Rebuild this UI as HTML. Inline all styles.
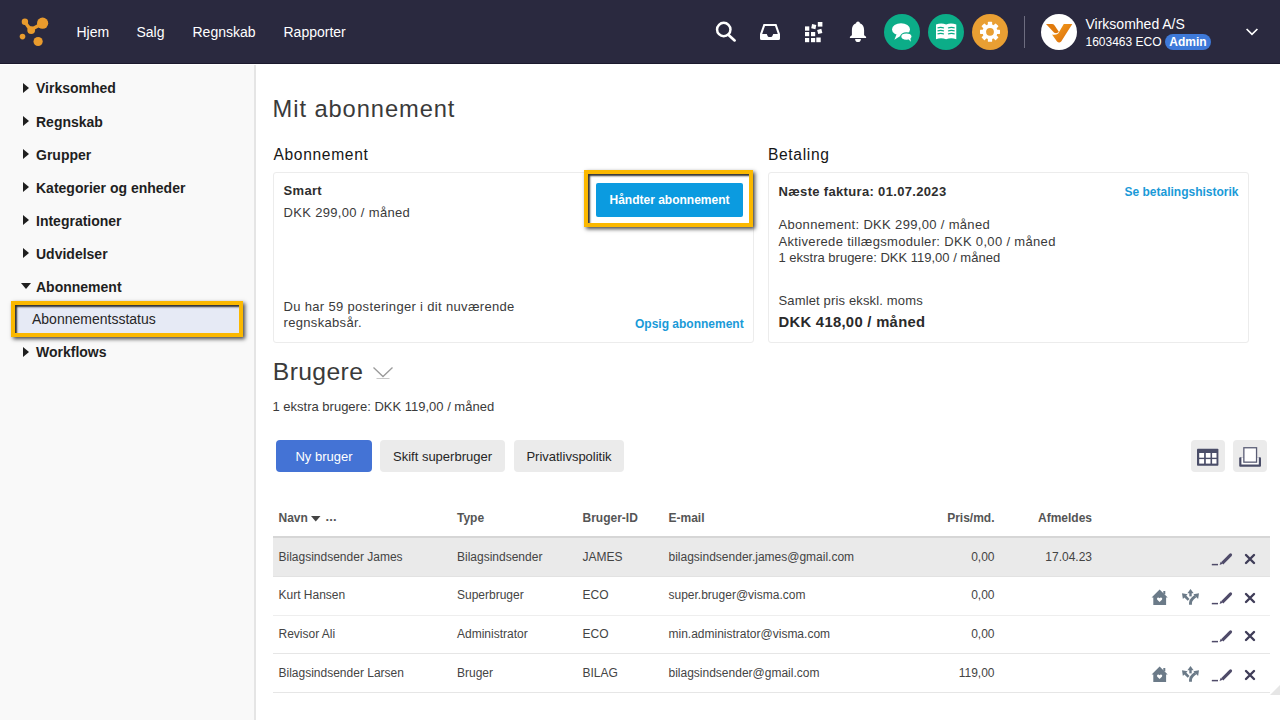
<!DOCTYPE html>
<html><head><meta charset="utf-8">
<style>
*{margin:0;padding:0;box-sizing:border-box}
html,body{width:1280px;height:720px;overflow:hidden;background:#fff;font-family:"Liberation Sans",sans-serif;color:#262626}
.a{position:absolute;white-space:nowrap}
#hdr{position:absolute;left:0;top:0;width:1280px;height:64px;background:#2a293f;box-shadow:inset 0 -1px 0 #1b192d}
.nav{color:#fff;font-size:14px;line-height:16px}
#side{position:absolute;left:0;top:65px;width:256px;height:655px;background:#f9f9f9;border-right:2px solid #e5e5e5}
.si{font-weight:bold;font-size:14px;line-height:16px;color:#1f1f1f;left:36px}
.tri{position:absolute;width:0;height:0;border-top:5px solid transparent;border-bottom:5px solid transparent;border-left:6px solid #1f1f1f;left:23px}
.hl{position:absolute;border:4px solid #fbb800;box-shadow:2px 2px 4px rgba(0,0,0,.72), inset 2px 2px 2px rgba(0,0,0,.8)}
.h1{font-size:23.7px;line-height:28px;color:#3a3a3a;letter-spacing:0.92px}
.h2{font-size:15.6px;line-height:20px;color:#161616;letter-spacing:0.65px}
.card{position:absolute;border:1px solid #ececec;border-radius:3px;background:#fff}
.t13{font-size:13px;line-height:16px;color:#3a3a3a;letter-spacing:0.33px}
.lnk{font-weight:bold;font-size:12px;line-height:14px;color:#1a9ad8}
.btn{position:absolute;border-radius:4px;font-size:13px;line-height:34px;text-align:center}
.th{font-weight:bold;font-size:12px;line-height:14px;color:#555}
.td{font-size:12px;line-height:14px;color:#444}
.row{position:absolute;left:273px;width:997px}
</style></head><body>

<div id="hdr">
  <svg class="a" style="left:0;top:0" width="64" height="64" viewBox="0 0 64 64">
    <g fill="#e99b2d">
      <circle cx="24.9" cy="21.8" r="3.2"/>
      <circle cx="42.6" cy="23.2" r="5.6"/>
      <circle cx="31.2" cy="30.1" r="3.9"/>
      <circle cx="22.5" cy="36.6" r="2.8"/>
      <circle cx="38.1" cy="41.5" r="4.6"/>
    </g>
    <path d="M24.9 21.8 Q28 27 31.2 29.6 Q36 27 42.6 23.2" stroke="#e99b2d" stroke-width="3.4" fill="none"/>
  </svg>
  <div class="a nav" style="left:76.5px;top:24.15px">Hjem</div>
  <div class="a nav" style="left:136.5px;top:24.15px">Salg</div>
  <div class="a nav" style="left:192.5px;top:24.15px">Regnskab</div>
  <div class="a nav" style="left:283.5px;top:24.15px">Rapporter</div>

  <!-- search -->
  <svg class="a" style="left:712px;top:18px" width="28" height="28" viewBox="0 0 28 28">
    <circle cx="11.75" cy="11.5" r="6.7" stroke="#fff" stroke-width="2.5" fill="none"/>
    <path d="M16.6 17 L22.6 22.4" stroke="#fff" stroke-width="2.7" stroke-linecap="round"/>
  </svg>
  <!-- inbox -->
  <svg class="a" style="left:760px;top:23px" width="21" height="18" viewBox="0 0 21 18">
    <path d="M3.5 1 H16.5 L20 11 V15.5 Q20 17 18.5 17 H1.5 Q0 17 0 15.5 V11 Z M5 3 L2.2 11 H6.8 L7.6 12.9 Q8 14 9 14 H11 Q12 14 12.4 12.9 L13.2 11 H17.8 L15 3 Z" fill="#fff" fill-rule="evenodd"/>
  </svg>
  <!-- grid -->
  <svg class="a" style="left:804px;top:21px" width="20" height="22" viewBox="0 0 20 22">
    <g fill="#fff">
      <rect x="1" y="17" width="4.2" height="4.2"/>
      <rect x="7" y="17" width="4.2" height="4.2"/>
      <rect x="12.3" y="16.5" width="4.4" height="4.7"/>
      <rect x="1" y="11" width="4.2" height="4.2"/>
      <rect x="7" y="11" width="4.2" height="4.2"/>
      <rect x="1" y="5.4" width="4.3" height="4.3"/>
      <rect x="7.6" y="3.5" width="4.3" height="4.3" transform="rotate(12 9.75 5.65)"/>
      <rect x="13.6" y="8.3" width="4.3" height="4.3" transform="rotate(-14 15.75 10.45)"/>
      <rect x="13.8" y="1" width="4.6" height="4.6"/>
    </g>
  </svg>
  <!-- bell -->
  <svg class="a" style="left:849px;top:21px" width="18" height="22" viewBox="0 0 18 22">
    <path d="M9 0.6 C10 0.6 10.8 1.4 10.9 2.2 C13.8 3 15.1 5.8 15.1 9 V14 C15.1 14.8 17.1 15.2 17.1 16 V17 H0.9 V16 C0.9 15.2 2.9 14.8 2.9 14 V9 C2.9 5.8 4.2 3 7.1 2.2 C7.2 1.4 8 0.6 9 0.6 Z" fill="#fff"/>
    <path d="M6.1 17.9 H11.9 Q11.9 21 9 21 Q6.1 21 6.1 17.9 Z" fill="#fff"/>
  </svg>
  <!-- chat circle -->
  <svg class="a" style="left:884px;top:14px" width="36" height="36" viewBox="0 0 36 36">
    <circle cx="18" cy="18" r="18" fill="#0cad88"/>
    <ellipse cx="17" cy="15.4" rx="9" ry="6.1" fill="#fff"/>
    <path d="M12.6 20.2 L10.4 25.8 L17.5 21.2 Z" fill="#fff"/>
    <ellipse cx="22.4" cy="22.6" rx="5.7" ry="3.7" fill="#fff" stroke="#0cad88" stroke-width="1.2"/>
    <path d="M24.6 25.2 L26.8 27.8 L26.4 24.4 Z" fill="#fff"/>
  </svg>
  <!-- book circle -->
  <svg class="a" style="left:928px;top:14px" width="36" height="36" viewBox="0 0 36 36">
    <circle cx="18" cy="18" r="18" fill="#0cad88"/>
    <path d="M8 10.6 Q13 8.3 18.1 10.4 Q23.2 8.3 28.3 10.6 V25.2 Q23.2 23.2 18.1 25.2 Q13 23.2 8 25.2 Z" fill="#fff"/>
    <g stroke="#0cad88" stroke-width="1.2" fill="none">
      <path d="M9.5 14 Q12.5 12.8 16 14"/><path d="M9.5 17 Q12.5 15.8 16 17"/><path d="M9.5 20 Q12.5 18.8 16 20"/>
      <path d="M20 14 Q23.5 12.8 26.7 14"/><path d="M20 17 Q23.5 15.8 26.7 17"/><path d="M20 20 Q23.5 18.8 26.7 20"/>
    </g>
  </svg>
  <!-- gear circle -->
  <svg class="a" style="left:972px;top:14px" width="36" height="36" viewBox="0 0 36 36">
    <circle cx="18" cy="18" r="18" fill="#e99f33"/>
    <g fill="#fff" transform="translate(18 17.8)">
      <circle r="7.5"/>
      <rect x="-2.15" y="-10" width="4.3" height="20" rx="0.6"/>
      <rect x="-2.15" y="-10" width="4.3" height="20" rx="0.6" transform="rotate(45)"/>
      <rect x="-2.15" y="-10" width="4.3" height="20" rx="0.6" transform="rotate(90)"/>
      <rect x="-2.15" y="-10" width="4.3" height="20" rx="0.6" transform="rotate(135)"/>
    </g>
    <circle cx="18" cy="17.8" r="3.9" fill="#e99f33"/>
  </svg>
  <div class="a" style="left:1024px;top:16px;width:1px;height:32px;background:#6e6d80"></div>
  <!-- avatar -->
  <svg class="a" style="left:1041px;top:14px" width="36" height="36" viewBox="0 0 36 36">
    <defs><linearGradient id="vg" x1="0" y1="0" x2="1" y2="1"><stop offset="0" stop-color="#f6a21c"/><stop offset="1" stop-color="#d8670a"/></linearGradient></defs>
    <circle cx="18" cy="18" r="18" fill="#fff"/>
    <path d="M5 10 H11 Q12.6 10 13.6 11.4 L17.8 17.8 Q16.2 19.8 13.2 18.8 Z" fill="#e07a0c"/>
    <path d="M31.3 10 H22.8 L17.2 19.6 Q14.5 21.4 11 20.6 L16 27.4 Q18 29.6 20.2 27.6 Z" fill="url(#vg)"/>
  </svg>
  <div class="a nav" style="left:1085.5px;top:16.15px">Virksomhed A/S</div>
  <div class="a" style="left:1085.5px;top:34.85px;font-size:12px;line-height:14px;color:#fff">1603463 ECO</div>
  <div class="a" style="left:1165px;top:34px;width:46px;height:16px;border-radius:8px;background:#3e79d9;color:#fff;font-weight:bold;font-size:12px;line-height:16px;text-align:center">Admin</div>
  <svg class="a" style="left:1244px;top:26px" width="16" height="12" viewBox="0 0 16 12">
    <path d="M2.6 3 L8 8.3 L13.4 3" stroke="#fff" stroke-width="1.7" fill="none"/>
  </svg>
</div>

<div id="side">
</div>
<!-- sidebar items (page coords) -->
<div class="tri" style="top:83px"></div><div class="a si" style="left:36px;top:80.40px">Virksomhed</div>
<div class="tri" style="top:116px"></div><div class="a si" style="left:36px;top:113.60px">Regnskab</div>
<div class="tri" style="top:149px"></div><div class="a si" style="left:36px;top:146.60px">Grupper</div>
<div class="tri" style="top:182px"></div><div class="a si" style="left:36px;top:179.60px">Kategorier og enheder</div>
<div class="tri" style="top:215px"></div><div class="a si" style="left:36px;top:212.60px">Integrationer</div>
<div class="tri" style="top:248px"></div><div class="a si" style="left:36px;top:245.60px">Udvidelser</div>
<div class="a" style="left:21px;top:283px;width:0;height:0;border-left:5px solid transparent;border-right:5px solid transparent;border-top:6px solid #1f1f1f"></div>
<div class="a si" style="left:36px;top:278.70px">Abonnement</div>
<div class="hl" style="left:11px;top:301px;width:232px;height:36px;background:#e6eaf5"></div>
<div class="a" style="left:32px;top:311.1px;font-size:14px;line-height:16px;color:#262626">Abonnementsstatus</div>
<div class="tri" style="top:347px"></div><div class="a si" style="left:36px;top:344.10px">Workflows</div>

<!-- main -->
<div class="a h1" style="left:272.6px;top:94.9px">Mit abonnement</div>
<div class="a h2" style="left:273.5px;top:145.2px">Abonnement</div>
<div class="a h2" style="left:768px;top:145.2px">Betaling</div>

<div class="card" style="left:273px;top:172px;width:481px;height:171px"></div>
<div class="a t13" style="left:283.5px;top:183.3px;font-weight:bold;color:#2e2e2e">Smart</div>
<div class="a t13" style="left:283.5px;top:204.8px">DKK 299,00 / måned</div>
<div class="a t13" style="left:283.5px;top:298.6px">Du har 59 posteringer i dit nuværende</div>
<div class="a t13" style="left:283.5px;top:315.2px">regnskabsår.</div>
<div class="a lnk" style="left:635px;top:316.6px">Opsig abonnement</div>

<div class="hl" style="left:584px;top:170px;width:169px;height:57px;background:#fff"></div>
<div class="a" style="left:596px;top:183px;width:147px;height:34px;background:#0b9be0;border-radius:2px;color:#fff;font-weight:bold;font-size:12px;line-height:34px;text-align:center">Håndter abonnement</div>

<div class="card" style="left:768px;top:172px;width:481px;height:171px"></div>
<div class="a t13" style="left:778.5px;top:183.6px;font-weight:bold;color:#2e2e2e">Næste faktura: 01.07.2023</div>
<div class="a lnk" style="left:1124.5px;top:184.6px">Se betalingshistorik</div>
<div class="a t13" style="left:778.5px;top:217.4px">Abonnement: DKK 299,00 / måned</div>
<div class="a t13" style="left:778.5px;top:233.8px">Aktiverede tillægsmoduler: DKK 0,00 / måned</div>
<div class="a t13" style="left:778.5px;top:250.2px;letter-spacing:0">1 ekstra brugere: DKK 119,00 / måned</div>
<div class="a t13" style="left:778.5px;top:292.7px;letter-spacing:0.15px">Samlet pris ekskl. moms</div>
<div class="a" style="left:778.5px;top:313.2px;font-weight:bold;font-size:14.8px;line-height:18px;color:#2a2a2a;letter-spacing:0.3px">DKK 418,00 / måned</div>

<div class="a h1" style="left:272.8px;top:358.1px;font-size:24.7px;letter-spacing:0.38px">Brugere</div>
<svg class="a" style="left:372px;top:365px" width="22" height="16" viewBox="0 0 22 16">
  <path d="M1.5 2.5 L11 11.5 L20.5 2.5" stroke="#9a9a9a" stroke-width="1.3" fill="none"/>
  <path d="M4.5 13.5 H17.5" stroke="#c8c8c8" stroke-width="1"/>
</svg>
<div class="a" style="left:272.5px;top:399px;font-size:13px;line-height:16px;color:#3a3a3a">1 ekstra brugere: DKK 119,00 / måned</div>

<div class="btn a" style="left:276px;top:440px;width:96px;height:32px;background:#4473d5;color:#fff">Ny bruger</div>
<div class="btn a" style="left:380px;top:440px;width:125px;height:32px;background:#ebebeb;color:#262626">Skift superbruger</div>
<div class="btn a" style="left:514px;top:440px;width:110px;height:32px;background:#ebebeb;color:#262626">Privatlivspolitik</div>

<div class="a" style="left:1191px;top:440px;width:34px;height:32px;background:#ebebeb;border-radius:4px"></div>
<svg class="a" style="left:1197px;top:448px" width="22" height="18" viewBox="0 0 22 18">
  <rect x="0" y="0.8" width="21.4" height="16.9" rx="0.8" fill="#4a4d68"/>
  <g fill="#fff"><rect x="2.2" y="5" width="4.9" height="4.7"/><rect x="8.8" y="5" width="4.7" height="4.7"/><rect x="15.1" y="5" width="4.4" height="4.7"/>
  <rect x="2.2" y="11.1" width="4.9" height="4.5"/><rect x="8.8" y="11.1" width="4.7" height="4.5"/><rect x="15.1" y="11.1" width="4.4" height="4.5"/></g>
</svg>
<div class="a" style="left:1233px;top:440px;width:34px;height:32px;background:#ebebeb;border-radius:4px"></div>
<svg class="a" style="left:1238px;top:446px" width="24" height="22" viewBox="0 0 24 22">
  <rect x="1.2" y="11.3" width="21.8" height="9.5" rx="1" fill="#4a4d68"/>
  <rect x="3.4" y="11.3" width="17.4" height="7.2" fill="#fff"/>
  <rect x="5.85" y="1.75" width="12.7" height="14.4" fill="#fff" stroke="#5a5d75" stroke-width="1.3"/>
</svg>

<!-- table -->
<div class="a th" style="left:278.5px;top:511px">Navn</div>
<svg class="a" style="left:311px;top:516px" width="10" height="6" viewBox="0 0 10 6"><path d="M0 0 H9.5 L4.75 5.5 Z" fill="#444"/></svg>
<div class="a th" style="left:325.5px;top:510.4px;font-size:13px;letter-spacing:0.1px">...</div>
<div class="a th" style="left:457px;top:511px">Type</div>
<div class="a th" style="left:582.5px;top:511px">Bruger-ID</div>
<div class="a th" style="left:668.5px;top:511px">E-mail</div>
<div class="a th" style="left:894px;top:511px;width:100.5px;text-align:right">Pris/md.</div>
<div class="a th" style="left:992px;top:511px;width:100px;text-align:right">Afmeldes</div>

<div class="row" style="top:536px;height:2px;background:#d6d6d6"></div>
<div class="row" style="top:538px;height:39px;background:#eaeaea;border-bottom:1px solid #e2e2e2"></div>
<div class="row" style="top:615px;height:1px;background:#eeeeee"></div>
<div class="row" style="top:653px;height:1px;background:#e6e6e6"></div>
<div class="row" style="top:692px;height:1px;background:#e6e6e6"></div>
<!-- ROWS -->
<div class="a td" style="left:278.5px;top:549.84px">Bilagsindsender James</div>
<div class="a td" style="left:457px;top:549.84px">Bilagsindsender</div>
<div class="a td" style="left:582.5px;top:549.84px">JAMES</div>
<div class="a td" style="left:668.5px;top:549.84px">bilagsindsender.james@gmail.com</div>
<div class="a td" style="left:894px;top:549.84px;width:100.5px;text-align:right">0,00</div>
<div class="a td" style="left:992px;top:549.84px;width:100px;text-align:right">17.04.23</div>
<svg class="a" style="left:1210px;top:550.0px" width="24" height="18" viewBox="0 0 24 18"><path d="M1.8 14.6 H8" stroke="#4f4b69" stroke-width="1.5"/><path d="M9.6 14.9 L10.7 11.8 L12.7 13.8 Z" fill="#4f4b69"/><path d="M11.1 12.2 L19.5 3.8 Q20.6 2.9 21.7 3.8 Q22.6 4.9 21.7 6 L13.3 14.4 Z" fill="#4f4b69"/></svg>
<svg class="a" style="left:1242px;top:550.0px" width="16" height="18" viewBox="0 0 16 18"><path d="M4 5 L12 13 M12 5 L4 13" stroke="#3f3d58" stroke-width="2.4" stroke-linecap="round"/></svg>
<div class="a td" style="left:278.5px;top:588.44px">Kurt Hansen</div>
<div class="a td" style="left:457px;top:588.44px">Superbruger</div>
<div class="a td" style="left:582.5px;top:588.44px">ECO</div>
<div class="a td" style="left:668.5px;top:588.44px">super.bruger@visma.com</div>
<div class="a td" style="left:894px;top:588.44px;width:100.5px;text-align:right">0,00</div>
<svg class="a" style="left:1150px;top:588.6px" width="20" height="18" viewBox="0 0 20 18"><path d="M9.6 0.6 L17.7 8.5 H16.1 V16 H3.3 V8.5 H1.6 Z" fill="#6b7a88"/><rect x="13.3" y="2" width="2" height="3.4" fill="#6b7a88"/><path d="M9.6 13 L7.3 10.7 Q6.4 9.5 7.5 8.7 Q8.7 8.1 9.6 9.2 Q10.5 8.1 11.7 8.7 Q12.8 9.5 11.9 10.7 Z" fill="#fff"/></svg>
<svg class="a" style="left:1181px;top:588.6px" width="20" height="18" viewBox="0 0 20 18"><path d="M9.5 7.4 V3" stroke="#6b7a88" stroke-width="2.4"/><path d="M6.4 4.2 L9.5 0.1 L12.6 4.2 Z" fill="#6b7a88"/><path d="M7.6 10.8 L3.8 7" stroke="#6b7a88" stroke-width="2.6"/><path d="M1 4.3 L6.6 5.2 L1.9 9.9 Z" fill="#6b7a88"/><path d="M9.5 15.7 V13.8 Q9.5 11.3 11.8 9.3 L14.4 7.2" stroke="#6b7a88" stroke-width="2.9" fill="none"/><path d="M18 4.3 L17.1 9.9 L12.4 5.2 Z" fill="#6b7a88"/></svg>
<svg class="a" style="left:1210px;top:588.5px" width="24" height="18" viewBox="0 0 24 18"><path d="M1.8 14.6 H8" stroke="#4f4b69" stroke-width="1.5"/><path d="M9.6 14.9 L10.7 11.8 L12.7 13.8 Z" fill="#4f4b69"/><path d="M11.1 12.2 L19.5 3.8 Q20.6 2.9 21.7 3.8 Q22.6 4.9 21.7 6 L13.3 14.4 Z" fill="#4f4b69"/></svg>
<svg class="a" style="left:1242px;top:588.5px" width="16" height="18" viewBox="0 0 16 18"><path d="M4 5 L12 13 M12 5 L4 13" stroke="#3f3d58" stroke-width="2.4" stroke-linecap="round"/></svg>
<div class="a td" style="left:278.5px;top:627.04px">Revisor Ali</div>
<div class="a td" style="left:457px;top:627.04px">Administrator</div>
<div class="a td" style="left:582.5px;top:627.04px">ECO</div>
<div class="a td" style="left:668.5px;top:627.04px">min.administrator@visma.com</div>
<div class="a td" style="left:894px;top:627.04px;width:100.5px;text-align:right">0,00</div>
<svg class="a" style="left:1210px;top:627.0px" width="24" height="18" viewBox="0 0 24 18"><path d="M1.8 14.6 H8" stroke="#4f4b69" stroke-width="1.5"/><path d="M9.6 14.9 L10.7 11.8 L12.7 13.8 Z" fill="#4f4b69"/><path d="M11.1 12.2 L19.5 3.8 Q20.6 2.9 21.7 3.8 Q22.6 4.9 21.7 6 L13.3 14.4 Z" fill="#4f4b69"/></svg>
<svg class="a" style="left:1242px;top:627.0px" width="16" height="18" viewBox="0 0 16 18"><path d="M4 5 L12 13 M12 5 L4 13" stroke="#3f3d58" stroke-width="2.4" stroke-linecap="round"/></svg>
<div class="a td" style="left:278.5px;top:665.64px">Bilagsindsender Larsen</div>
<div class="a td" style="left:457px;top:665.64px">Bruger</div>
<div class="a td" style="left:582.5px;top:665.64px">BILAG</div>
<div class="a td" style="left:668.5px;top:665.64px">bilagsindsender@gmail.com</div>
<div class="a td" style="left:894px;top:665.64px;width:100.5px;text-align:right">119,00</div>
<svg class="a" style="left:1150px;top:665.6px" width="20" height="18" viewBox="0 0 20 18"><path d="M9.6 0.6 L17.7 8.5 H16.1 V16 H3.3 V8.5 H1.6 Z" fill="#6b7a88"/><rect x="13.3" y="2" width="2" height="3.4" fill="#6b7a88"/><path d="M9.6 13 L7.3 10.7 Q6.4 9.5 7.5 8.7 Q8.7 8.1 9.6 9.2 Q10.5 8.1 11.7 8.7 Q12.8 9.5 11.9 10.7 Z" fill="#fff"/></svg>
<svg class="a" style="left:1181px;top:665.6px" width="20" height="18" viewBox="0 0 20 18"><path d="M9.5 7.4 V3" stroke="#6b7a88" stroke-width="2.4"/><path d="M6.4 4.2 L9.5 0.1 L12.6 4.2 Z" fill="#6b7a88"/><path d="M7.6 10.8 L3.8 7" stroke="#6b7a88" stroke-width="2.6"/><path d="M1 4.3 L6.6 5.2 L1.9 9.9 Z" fill="#6b7a88"/><path d="M9.5 15.7 V13.8 Q9.5 11.3 11.8 9.3 L14.4 7.2" stroke="#6b7a88" stroke-width="2.9" fill="none"/><path d="M18 4.3 L17.1 9.9 L12.4 5.2 Z" fill="#6b7a88"/></svg>
<svg class="a" style="left:1210px;top:665.5px" width="24" height="18" viewBox="0 0 24 18"><path d="M1.8 14.6 H8" stroke="#4f4b69" stroke-width="1.5"/><path d="M9.6 14.9 L10.7 11.8 L12.7 13.8 Z" fill="#4f4b69"/><path d="M11.1 12.2 L19.5 3.8 Q20.6 2.9 21.7 3.8 Q22.6 4.9 21.7 6 L13.3 14.4 Z" fill="#4f4b69"/></svg>
<svg class="a" style="left:1242px;top:665.5px" width="16" height="18" viewBox="0 0 16 18"><path d="M4 5 L12 13 M12 5 L4 13" stroke="#3f3d58" stroke-width="2.4" stroke-linecap="round"/></svg>
<svg class="a" style="left:1270px;top:685px" width="10" height="10" viewBox="0 0 10 10"><path d="M10 0 V10 H0 Z" fill="#e6e6e6"/></svg>
<!-- /ROWS -->
</body></html>
